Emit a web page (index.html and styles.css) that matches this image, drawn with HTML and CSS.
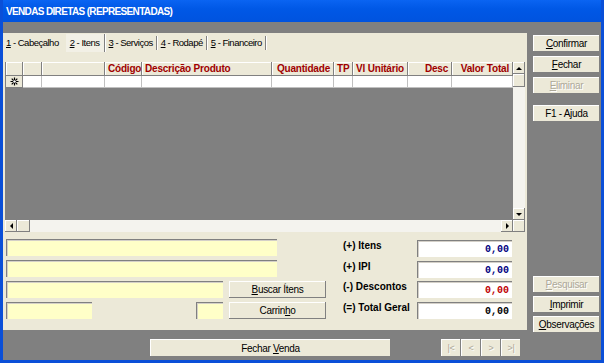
FILE: index.html
```html
<!DOCTYPE html>
<html lang="pt-BR">
<head>
    <meta charset="UTF-8">
    <title>Vendas Diretas (Representadas)</title>
    <link rel="stylesheet" href="styles.css">
</head>
<body>
    <div class="janela">
        <div class="tituloBar">VENDAS DIRETAS (REPRESENTADAS)</div>
        <div class="faixa"></div>
        <div class="corpo">
            <div class="colPrincipal">
                <div class="painel">
                    <div class="abas">
                        <div class="aba"><u>1</u> - Cabeçalho</div>
                        <div class="aba ativa"><u>2</u> - Itens</div>
                        <div class="aba"><u>3</u> - Serviços</div>
                        <div class="aba"><u>4</u> - Rodapé</div>
                        <div class="aba"><u>5</u> - Financeiro</div>
                    </div>

                    <div class="grade">
                        <div class="gradeDados">
                            <div class="linha cabecalho">
                                <div class="cel"></div>
                                <div class="cel"></div>
                                <div class="cel"></div>
                                <div class="cel dir">Código</div>
                                <div class="cel">Descrição Produto</div>
                                <div class="cel dir">Quantidade</div>
                                <div class="cel centro">TP</div>
                                <div class="cel centro">Vl Unitário</div>
                                <div class="cel dir">Desc</div>
                                <div class="cel dir">Valor Total</div>
                            </div>
                            <div class="linha novo">
                                <div class="cel ind">
                                    <svg width="9" height="9" viewBox="0 0 9 9">
                                        <path d="M4.5 0.5v8M0.5 4.5h8M1.7 1.7l5.6 5.6M7.3 1.7l-5.6 5.6" stroke="#000" stroke-width="1.2"/>
                                        <circle cx="4.5" cy="4.5" r="1.3" fill="#fff"/>
                                    </svg>
                                </div>
                                <div class="cel"></div>
                                <div class="cel"></div>
                                <div class="cel"></div>
                                <div class="cel"></div>
                                <div class="cel"></div>
                                <div class="cel"></div>
                                <div class="cel"></div>
                                <div class="cel"></div>
                                <div class="cel"></div>
                            </div>
                        </div>
                        <div class="scrollV">
                            <div class="seta"><span class="tri cima"></span></div>
                            <div class="polegar"></div>
                            <div class="trilho"></div>
                            <div class="seta"><span class="tri baixo"></span></div>
                        </div>
                        <div class="scrollH">
                            <div class="seta"><span class="tri esq"></span></div>
                            <div class="polegar"></div>
                            <div class="trilho"></div>
                            <div class="seta"><span class="tri dirSeta"></span></div>
                        </div>
                        <div class="canto"></div>
                    </div>

                    <div class="rodapeItens">
                        <div class="campos">
                            <div class="campo c1"></div>
                            <div class="campo c2"></div>
                            <div class="campo c3"></div>
                            <button class="botao b3"><u>B</u>uscar Ítens</button>
                            <div class="campo c4a"></div>
                            <div class="campo c4b"></div>
                            <button class="botao b4">Carrin<u>h</u>o</button>
                        </div>
                        <div class="totais">
                            <div class="rotulo">(+) Itens</div>
                            <div class="valor azul">0,00</div>
                            <div class="rotulo">(+) IPI</div>
                            <div class="valor azul">0,00</div>
                            <div class="rotulo">(-) Descontos</div>
                            <div class="valor vermelho">0,00</div>
                            <div class="rotulo">(=) Total Geral</div>
                            <div class="valor">0,00</div>
                        </div>
                    </div>
                </div>
                <div class="rodape">
                    <button class="botao fecharVenda">Fechar <u>V</u>enda</button>
                    <div class="navegador">
                        <button class="botao nav desab">|&lt;</button>
                        <button class="botao nav desab">&lt;</button>
                        <button class="botao nav desab">&gt;</button>
                        <button class="botao nav desab">&gt;|</button>
                    </div>
                </div>
            </div>
            <div class="lateral">
                <button class="botao"><u>C</u>onfirmar</button>
                <button class="botao"><u>F</u>echar</button>
                <button class="botao desab"><u>E</u>liminar</button>
                <button class="botao ajuda">F1 - Ajuda</button>
                <div class="grupoBaixo">
                    <button class="botao desab"><u>P</u>esquisar</button>
                    <button class="botao"><u>I</u>mprimir</button>
                    <button class="botao"><u>O</u>bservações</button>
                </div>
            </div>
        </div>
    </div>
</body>
</html>
```

FILE: styles.css
```css
body{
    margin: 0;
    padding: 0;
    font-family: "Liberation Sans", Arial, sans-serif;
    font-size: 10px;
    color: #000;
}
.janela{
    width: 604px;
    height: 363px;
    box-sizing: border-box;
    border-left: 3px solid #0a4fd8;
    border-right: 3px solid #0a4fd8;
    border-bottom: 3px solid #0a4fd8;
    background: #808080;
    display: flex;
    flex-direction: column;
    overflow: hidden;
}
.tituloBar{
    height: 22px;
    background: linear-gradient(#0a64f2, #0058e6 40%, #0053df);
    color: #fff;
    font-weight: bold;
    font-size: 10px;
    letter-spacing: -0.65px;
    line-height: 23px;
    margin: 0 -3px;
    padding-left: 6px;
}
.faixa{
    height: 11px;
}
.corpo{
    display: flex;
    flex: 1;
}
.colPrincipal{
    width: 524px;
    display: flex;
    flex-direction: column;
}
.painel{
    height: 297px;
    background: #ece9d8;
    padding: 1px 2px 0 2px;
    box-sizing: border-box;
}

/* abas */
.abas{
    display: flex;
    height: 18px;
    align-items: center;
}
.aba{
    padding: 0 3px;
    border-right: 1px solid #808080;
    box-shadow: 1px 0 0 #fff;
    line-height: 14px;
    font-size: 9.5px;
    letter-spacing: -0.5px;
    margin-right: 1px;
}
.aba:first-child{
    padding-left: 1px;
    padding-right: 6px;
    border-right: none;
    box-shadow: none;
}
.aba.ativa{
    background: #f2f0e6;
    border-right: 1px solid #808080;
    padding: 2px 4px;
}

/* grade */
.grade{
    margin: 10px 0 0 0;
    width: 520px;
    height: 170px;
    display: grid;
    grid-template-columns: 508px 12px;
    grid-template-rows: 158px 12px;
}
.gradeDados{
    background: #808080;
    border-left: 1px solid #808080;
    box-sizing: border-box;
}
.linha{
    display: grid;
    grid-template-columns: 17px 19px 63px 37px 130px 62px 19px 55px 44px 61px;
}
.cabecalho{
    height: 14px;
    background: #ece9d8;
}
.cabecalho .cel{
    color: #a00000;
    font-weight: bold;
    line-height: 13px;
    border-right: 1px solid #808080;
    border-bottom: 1px solid #808080;
    box-shadow: inset 1px 1px 0 #fff;
    padding: 0 3px;
    white-space: nowrap;
    overflow: hidden;
    letter-spacing: -0.2px;
}
.novo{
    height: 12px;
}
.novo .cel{
    background: #fff;
    border-right: 1px solid #c0c0c0;
    border-bottom: 1px solid #c0c0c0;
}
.novo .ind{
    background: #ece9d8;
    border-right: 1px solid #808080;
    border-bottom: 1px solid #808080;
    display: flex;
    align-items: center;
    justify-content: center;
}
.dir{ text-align: right; }
.centro{ text-align: center; }

/* barras de rolagem */
.scrollV, .scrollH{
    background: #f4f3ee;
    display: flex;
}
.scrollV{
    flex-direction: column;
}
.seta, .polegar, .canto{
    background: #ece9d8;
    box-shadow: inset -1px -1px 0 #808080, inset 1px 1px 0 #fff;
    display: flex;
    align-items: center;
    justify-content: center;
}
.scrollV .seta{ height: 12px; }
.scrollV .polegar{ height: 13px; }
.scrollH .seta{ width: 12px; }
.scrollH .polegar{ width: 13px; }
.trilho{ flex: 1; }
.tri{
    width: 0;
    height: 0;
    border: 3px solid transparent;
}
.tri.cima{ border-bottom-color: #000; border-top-width: 0; }
.tri.baixo{ border-top-color: #000; border-bottom-width: 0; }
.tri.esq{ border-right-color: #000; border-left-width: 0; }
.tri.dirSeta{ border-left-color: #000; border-right-width: 0; }

/* parte de baixo */
.rodapeItens{
    display: flex;
    margin-top: 7px;
    padding-left: 1px;
}
.campos{
    display: grid;
    grid-template-columns: 86px 104px 27px 6px 48px 49px;
    grid-template-rows: 17px 17px 17px 17px;
    row-gap: 4px;
    width: 320px;
}
.campo{
    background: #ffffc8;
    border-top: 1px solid #808080;
    border-left: 1px solid #808080;
    box-shadow: inset 1px 1px 0 #d4d0c8;
}
.c1, .c2{ grid-column: 1 / 6; }
.c3{ grid-column: 1 / 4; }
.b3{ grid-column: 5 / 7; grid-row: 3; }
.c4a{ grid-column: 1; grid-row: 4; }
.c4b{ grid-column: 3; grid-row: 4; }
.b4{ grid-column: 5 / 7; grid-row: 4; }
.totais{
    display: grid;
    grid-template-columns: 74px 95px;
    grid-template-rows: 17px 17px 17px 17px;
    row-gap: 3.5px;
    margin-left: 17px;
    margin-top: 1px;
}
.rotulo{
    font-weight: bold;
    line-height: 11px;
}
.valor{
    background: #fff;
    border-top: 1px solid #808080;
    border-left: 1px solid #808080;
    box-shadow: inset 1px 1px 0 #d4d0c8;
    font-family: "Liberation Mono", "Courier New", monospace;
    font-weight: bold;
    font-size: 10px;
    text-align: right;
    padding: 3px 3px 0 0;
    line-height: 12px;
}
.azul{ color: #000080; }
.vermelho{ color: #c00000; }

/* botoes */
.botao{
    font-family: "Liberation Sans", Arial, sans-serif;
    font-size: 10px;
    letter-spacing: -0.3px;
    background: #ece9d8;
    border: none;
    box-shadow: inset -1px -1px 0 #808080, inset 1px 1px 0 #fff;
    height: 17px;
    padding: 0;
    color: #000;
}
.botao.desab{
    color: #aca899;
    text-shadow: 1px 1px 0 #fff;
}

.rodape{
    flex: 1;
    display: flex;
    align-items: flex-start;
    padding: 9px 0 0 147px;
}
.fecharVenda{
    width: 241px;
    height: 18px;
}
.navegador{
    display: flex;
    margin-left: 50px;
}
.nav{
    width: 20px;
    height: 18px;
    font-size: 9px;
}

.lateral{
    width: 74px;
    display: flex;
    flex-direction: column;
    padding: 2px 0 27px 6px;
    box-sizing: border-box;
    gap: 4px;
}
.lateral .botao{
    width: 67px;
}
.lateral .ajuda{
    margin-top: 7px;
}
.grupoBaixo{
    margin-top: auto;
    display: flex;
    flex-direction: column;
    gap: 3px;
}
```
